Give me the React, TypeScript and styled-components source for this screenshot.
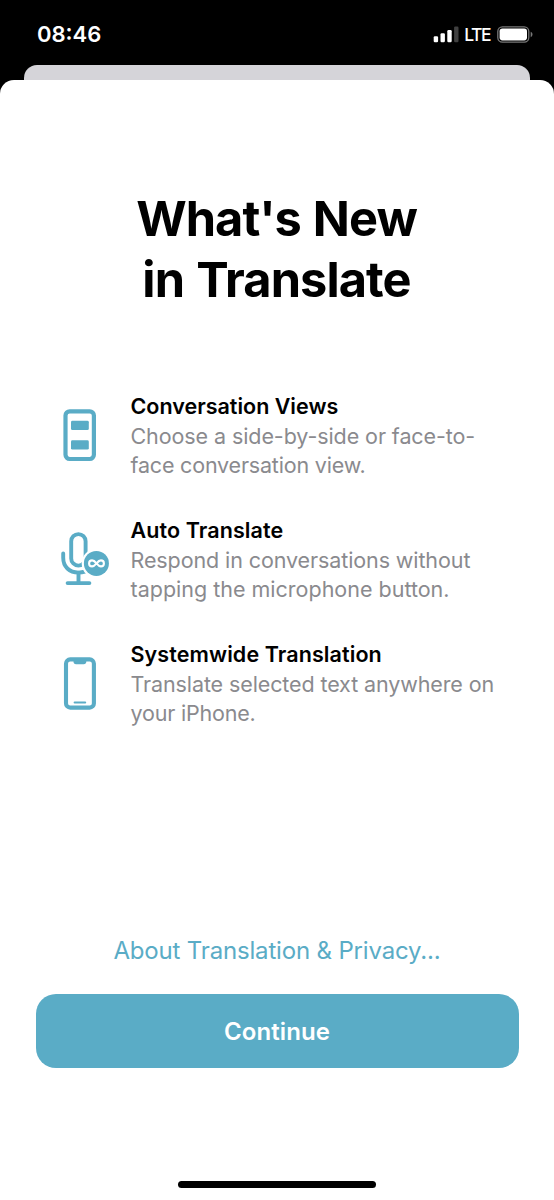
import React from "react";
import styled, { createGlobalStyle } from "styled-components";

const teal = "#5aacc6";

const GlobalStyle = createGlobalStyle`
  *, *::before, *::after { box-sizing: border-box; }
  body {
    margin: 0;
    background: #000;
    font-family: Inter, "Liberation Sans", sans-serif;
    -webkit-font-smoothing: antialiased;
  }
`;

const Screen = styled.div`
  width: 554px;
  height: 1200px;
  display: flex;
  flex-direction: column;
  background: #000;
  overflow: hidden;
`;

const StatusBar = styled.header`
  height: 65px;
  flex: none;
  padding: 1px 21px 0 37px;
  display: flex;
  align-items: center;
  justify-content: space-between;
  color: #fff;
`;

const Clock = styled.time`
  font-size: 22px;
  line-height: 28px;
  font-weight: 570;
  letter-spacing: 0;
  margin-top: 1px;
`;

const Indicators = styled.div`
  display: flex;
  align-items: center;
  margin-top: 3px;
`;

const Network = styled.span`
  font-size: 17.5px;
  line-height: 24px;
  font-weight: 450;
  letter-spacing: -1.5px;
  margin: 0 7px 0 5px;
`;

const BackSheet = styled.div`
  height: 15px;
  flex: none;
  margin: 0 24px;
  border-radius: 13px 13px 0 0;
  background: #d5d4d9;
`;

const Sheet = styled.main`
  flex: 1;
  display: flex;
  flex-direction: column;
  align-items: center;
  padding: 108px 36px 12px;
  border-radius: 14px 14px 0 0;
  background: #fff;
`;

const Line = styled.span<{ $tracking?: number }>`
  display: block;
  white-space: nowrap;
  letter-spacing: ${({ $tracking = 0 }) => $tracking}px;
`;

const Title = styled.h1`
  margin: 0;
  padding-right: 1px;
  font-size: 48.7px;
  line-height: 61px;
  font-weight: 700;
  word-spacing: 1.5px;
  text-align: center;
  color: #000;
`;

const Features = styled.ul`
  align-self: stretch;
  margin: 82px 0 0;
  padding: 0;
  list-style: none;
  display: flex;
  flex-direction: column;
  gap: 35.5px;
`;

const Feature = styled.li`
  height: 88.5px;
  display: flex;
  align-items: center;
  padding-left: 20px;
  gap: 18.5px;
`;

const FeatureIcon = styled.svg`
  width: 56px;
  height: 60px;
  flex: none;
  margin-bottom: 1.5px;
`;

const FeatureName = styled.h2`
  margin: 0;
  font-size: 21.5px;
  line-height: 29.5px;
  font-weight: 570;
  color: #000;
`;

const FeatureText = styled.p`
  margin: 0;
  font-size: 21.5px;
  line-height: 29.5px;
  font-weight: 400;
  color: #8a8a8e;
`;

const Footer = styled.footer`
  margin-top: auto;
  align-self: stretch;
  display: flex;
  flex-direction: column;
  align-items: center;
`;

const PrivacyLink = styled.a`
  font-size: 24px;
  line-height: 32px;
  color: ${teal};
`;

const ContinueButton = styled.button`
  width: 483px;
  height: 74px;
  margin: 27px 0 113px;
  padding: 2px 0 0;
  border: 0;
  border-radius: 20px;
  background: ${teal};
  color: #fff;
  font-family: inherit;
  font-size: 24px;
  line-height: 32px;
  font-weight: 570;
`;

const HomeIndicator = styled.div`
  width: 198px;
  height: 7.5px;
  border-radius: 4px;
  background: #000;
`;

const SignalIcon = () => (
  <svg width="26" height="17" viewBox="0 0 26 17" fill="#fff">
    <rect x="0.7" y="10.3" width="4.4" height="6" rx="1.2" />
    <rect x="7.5" y="7.3" width="4.4" height="9" rx="1.2" />
    <rect x="14.3" y="4" width="4.4" height="12.3" rx="1.2" />
    <rect x="21.1" y="0.5" width="4.4" height="15.8" rx="1.2" opacity="0.25" />
  </svg>
);

const BatteryIcon = () => (
  <svg width="36" height="17" viewBox="0 0 36 17">
    <rect x="0.8" y="0.8" width="31" height="15.4" rx="4.6" fill="none" stroke="#777" strokeWidth="1.3" />
    <rect x="2.6" y="2.6" width="27.4" height="11.8" rx="2.8" fill="#fff" />
    <path d="M33.7 5.8v5.4c1.1-.5 1.8-1.5 1.8-2.7s-.7-2.2-1.8-2.7z" fill="#777" />
  </svg>
);

const ConversationIcon = () => (
  <FeatureIcon viewBox="56 406.2 56 60">
    <rect x="65.5" y="411.5" width="28.4" height="47.7" rx="4.2" fill="none" stroke={teal} strokeWidth="4.2" />
    <rect x="71" y="421" width="17.8" height="9.3" rx="1.4" fill={teal} />
    <rect x="71" y="440.5" width="17.8" height="9.3" rx="1.4" fill={teal} />
  </FeatureIcon>
);

const AutoMicIcon = () => (
  <FeatureIcon viewBox="56 530.2 56 60" fill="none">
    <g stroke={teal} strokeWidth="3.9" strokeLinecap="round">
      <rect x="71.2" y="534.3" width="14.4" height="31.5" rx="7.2" />
      <path d="M63.2 553.6v4.4c0 8.8 6 14.8 15.3 14.8s15.3-6 15.3-14.8" />
      <path d="M78.5 573v10.2M67.6 583.3h21.8" />
    </g>
    <circle cx="96.4" cy="563.6" r="14.7" fill="#fff" />
    <circle cx="96.4" cy="563.6" r="12.5" fill={teal} />
    <path
      d="M96.5 563.6c-1.6-2-2.7-3-4.4-3a3 3 0 0 0 0 6c1.7 0 2.8-1 4.4-3s2.7-3 4.4-3a3 3 0 0 1 0 6c-1.7 0-2.8-1-4.4-3z"
      stroke="#fff"
      strokeWidth="2.1"
      strokeLinejoin="round"
    />
  </FeatureIcon>
);

const PhoneIcon = () => (
  <FeatureIcon viewBox="56 654.2 56 60">
    <rect x="66" y="659.6" width="27.9" height="48.2" rx="4.2" fill="none" stroke={teal} strokeWidth="4.1" />
    <path d="M72.4 660h15c-.9.3-1.1.8-1.1 1.7 0 1.8-.9 2.8-2.6 2.8h-7.6c-1.7 0-2.6-1-2.6-2.8 0-.9-.2-1.4-1.1-1.7z" fill={teal} />
    <rect x="73.6" y="701.6" width="12.6" height="2.1" rx="1" fill={teal} />
  </FeatureIcon>
);

type TextLine = [text: string, tracking: number];

const features: { icon: React.ReactNode; name: TextLine; text: TextLine[] }[] = [
  {
    icon: <ConversationIcon />,
    name: ["Conversation Views", 0],
    text: [
      ["Choose a side-by-side or face-to-", -0.09],
      ["face conversation view.", -0.19],
    ],
  },
  {
    icon: <AutoMicIcon />,
    name: ["Auto Translate", 0.1],
    text: [
      ["Respond in conversations without", -0.1],
      ["tapping the microphone button.", 0],
    ],
  },
  {
    icon: <PhoneIcon />,
    name: ["Systemwide Translation", 0.1],
    text: [
      ["Translate selected text anywhere on", -0.11],
      ["your iPhone.", -0.2],
    ],
  },
];

export default function App() {
  return (
    <Screen>
      <GlobalStyle />
      <StatusBar>
        <Clock>08:46</Clock>
        <Indicators>
          <SignalIcon />
          <Network>LTE</Network>
          <BatteryIcon />
        </Indicators>
      </StatusBar>
      <BackSheet />
      <Sheet>
        <Title>
          <Line $tracking={-0.95}>What's New</Line>
          <Line $tracking={-0.9}>in Translate</Line>
        </Title>
        <Features>
          {features.map(({ icon, name, text }) => (
            <Feature key={name[0]}>
              {icon}
              <div>
                <FeatureName>
                  <Line $tracking={name[1]}>{name[0]}</Line>
                </FeatureName>
                <FeatureText>
                  {text.map(([line, tracking]) => (
                    <Line key={line} $tracking={tracking}>{line}</Line>
                  ))}
                </FeatureText>
              </div>
            </Feature>
          ))}
        </Features>
        <Footer>
          <PrivacyLink>
            <Line $tracking={-0.17}>About Translation &amp; Privacy...</Line>
          </PrivacyLink>
          <ContinueButton>
            <Line $tracking={0.1}>Continue</Line>
          </ContinueButton>
          <HomeIndicator />
        </Footer>
      </Sheet>
    </Screen>
  );
}
